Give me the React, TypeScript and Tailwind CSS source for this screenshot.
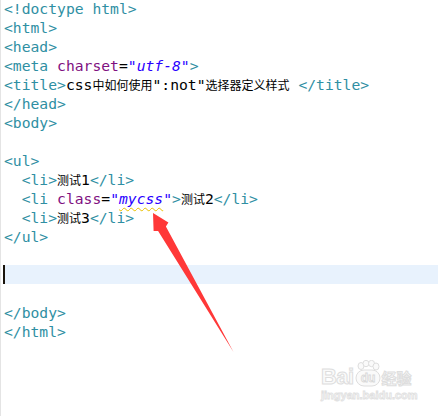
import React from "react";

// editor colours
const tag = "text-[#2f8fa3]";
const attr = "text-[#7f107f]";
const val = "text-[#2a00ff] italic";
const cjk = "font-['Noto_Sans_CJK_SC',sans-serif] text-[12px] text-black";

const Line = ({ children }: { children?: React.ReactNode }) => (
  <div className="h-[19px] leading-[19px] whitespace-pre">{children}</div>
);

const Zh = ({ t }: { t: string }) => <span className={cjk}>{t}</span>;

const Watermark = () => (
  <div className="absolute left-[320px] top-[360px] flex flex-col items-start select-none">
    <div className="flex items-end">
      <span className="font-['Liberation_Sans',sans-serif] font-bold text-[22px] leading-[22px] tracking-tight text-[#fafafa] [-webkit-text-stroke:1px_#dedede]">
        Bai
      </span>
      <svg width="26" height="28" viewBox="0 0 26 28" className="mx-[1px]">
        <g fill="#fafafa" stroke="#dedede" strokeWidth="1">
          <ellipse cx="6" cy="6" rx="3" ry="3.5" />
          <ellipse cx="11" cy="3.5" rx="3" ry="3.2" />
          <ellipse cx="16.5" cy="3.5" rx="3" ry="3.2" />
          <ellipse cx="21" cy="6.5" rx="3" ry="3.5" />
          <rect x="1" y="10" width="24" height="16" rx="8" />
        </g>
        <text x="13" y="22" textAnchor="middle" fontFamily="Liberation Sans, sans-serif" fontWeight="bold" fontSize="12" fill="#fafafa" stroke="#d8d8d8" strokeWidth="0.8">
          du
        </text>
      </svg>
      <span className="font-['Noto_Sans_CJK_SC',sans-serif] font-bold text-[15px] leading-[20px] text-[#fafafa] [-webkit-text-stroke:1px_#dedede]">
        经验
      </span>
    </div>
    <span className="font-['Liberation_Sans',sans-serif] font-bold text-[11px] leading-[13px] mt-[1px] text-[#fafafa] [-webkit-text-stroke:0.8px_#e0e0e0]">
      jingyan.baidu.com
    </span>
  </div>
);

export default function App() {
  return (
    <div className="relative w-[438px] h-[416px] bg-white overflow-hidden border-l border-[#e4e4e4] font-['DejaVu_Sans_Mono',monospace] text-[14.7px] text-black">
      <div className="-mt-px pl-[3px]">
        <Line><span className={tag}>{"<!doctype html>"}</span></Line>
        <Line><span className={tag}>{"<html>"}</span></Line>
        <Line><span className={tag}>{"<head>"}</span></Line>
        <Line>
          <span className={tag}>{"<meta "}</span>
          <span className={attr}>charset</span>=<span className={val}>"utf-8"</span>
          <span className={tag}>{">"}</span>
        </Line>
        <Line>
          <span className={tag}>{"<title>"}</span>css<Zh t="中如何使用" />":not"<Zh t="选择器定义样式" />{" "}
          <span className={tag}>{"</title>"}</span>
        </Line>
        <Line><span className={tag}>{"</head>"}</span></Line>
        <Line><span className={tag}>{"<body>"}</span></Line>
        <Line />
        <Line><span className={tag}>{"<ul>"}</span></Line>
        <Line>
          {"  "}<span className={tag}>{"<li>"}</span><Zh t="测试" />1<span className={tag}>{"</li>"}</span>
        </Line>
        <Line>
          {"  "}<span className={tag}>{"<li "}</span>
          <span className={attr}>class</span>=<span className={val}>"<span className="underline decoration-wavy decoration-[#e8c000] decoration-1 underline-offset-[3px]">mycss</span>"</span>
          <span className={tag}>{">"}</span><Zh t="测试" />2<span className={tag}>{"</li>"}</span>
        </Line>
        <Line>
          {"  "}<span className={tag}>{"<li>"}</span><Zh t="测试" />3<span className={tag}>{"</li>"}</span>
        </Line>
        <Line><span className={tag}>{"</ul>"}</span></Line>
        <Line />
        <div className="flex h-[19px] -ml-[1px]">
          <span className="w-[2px] h-[19px] bg-[#1a140c]" />
          <span className="flex-1 bg-[#e8f2fd]" />
        </div>
        <Line />
        <Line><span className={tag}>{"</body>"}</span></Line>
        <Line><span className={tag}>{"</html>"}</span></Line>
      </div>

      <svg className="absolute left-0 top-0 pointer-events-none" width="438" height="416" viewBox="0 0 438 416">
        <polygon
          fill="#ff3838"
          points="152,213 167.4,222.6 164.9,226.4 232.5,352 157.1,230.9 152.6,231.1"
        />
      </svg>

      <Watermark />
    </div>
  );
}
